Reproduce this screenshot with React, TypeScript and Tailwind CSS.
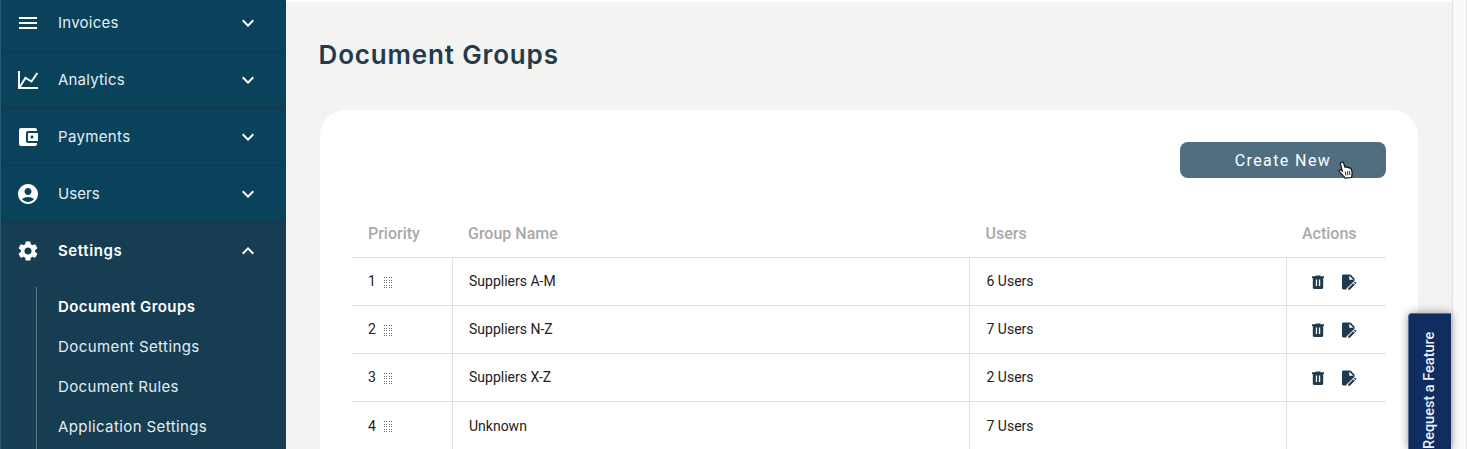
import { ReactNode } from "react"
import clsx from "clsx"
import {
  MdAccountBalanceWallet,
  MdAccountCircle,
  MdExpandLess,
  MdExpandMore,
  MdMenu,
  MdSettings,
} from "react-icons/md"

type NavItem = {
  label: string
  icon: ReactNode
  tracking: string
}

const navItems: NavItem[] = [
  { label: "Invoices", icon: <MdMenu size={24} />, tracking: "tracking-[0.25px]" },
  { label: "Analytics", icon: <ChartIcon />, tracking: "tracking-[0.2px]" },
  {
    label: "Payments",
    icon: <MdAccountBalanceWallet size={24} />,
    tracking: "tracking-[0.35px]",
  },
  {
    label: "Users",
    icon: <MdAccountCircle size={24} />,
    tracking: "tracking-[0.1px]",
  },
]

const settingsItems = [
  {
    label: "Document Groups",
    className: "font-semibold text-white tracking-[0.4px]",
  },
  { label: "Document Settings", className: "tracking-[0.42px]" },
  { label: "Document Rules", className: "tracking-[0.35px]" },
  { label: "Application Settings", className: "tracking-[0.4px]" },
]

const groups = [
  { priority: 1, name: "Suppliers A-M", users: "6 Users", editable: true },
  { priority: 2, name: "Suppliers N-Z", users: "7 Users", editable: true },
  { priority: 3, name: "Suppliers X-Z", users: "2 Users", editable: true },
  { priority: 4, name: "Unknown", users: "7 Users", editable: false },
]

export default function App() {
  return (
    <div className="flex h-[449px] overflow-hidden bg-[#fafafa] font-[Roboto,sans-serif]">
      <Sidebar />
      <main className="h-full flex-1 border-t-2 border-white bg-[#f3f3f1] pr-[34px] pl-[34px]">
        <h1 className="-ml-[1.5px] pt-[35px] font-[Inter,sans-serif] text-[26px] leading-9 font-semibold tracking-[0.85px] text-[#233b4b]">
          Document Groups
        </h1>
        <section className="mt-[37px] h-[400px] rounded-t-[26px] bg-white px-8 pt-8">
          <div className="flex justify-end">
            <button className="relative h-9 w-[206px] rounded-lg bg-[#506e80] pt-0.5 text-base tracking-[1.4px] text-white">
              Create New
              <HandCursor />
            </button>
          </div>
          <GroupTable />
        </section>
      </main>
      <div className="h-full w-[15px] border-x border-[#e4e4e4] bg-[#fafafa]" />
      <FeatureTab />
    </div>
  )
}

function Sidebar() {
  return (
    <nav className="h-full w-[286px] shrink-0 overflow-hidden border-l border-[#2a5a72] bg-[#0a425b] font-[Inter,sans-serif] text-[15px] text-[#e3eef3]">
      <div className="-mt-[5px]">
        {navItems.map((item) => (
          <div
            key={item.label}
            className="flex h-[57px] items-center border-b border-[#173548] pr-[26px] pl-[15px]"
          >
            <span className="text-white">{item.icon}</span>
            <span className={clsx("ml-[18px] pt-px", item.tracking)}>
              {item.label}
            </span>
            <MdExpandMore size={24} className="ml-auto text-white" />
          </div>
        ))}
      </div>
      <div className="h-[240px] bg-[#163d51]">
        <div className="flex h-14 items-center pr-[26px] pl-[15px] text-white">
          <MdSettings size={24} />
          <span className="ml-[18px] pt-px font-semibold tracking-[0.6px]">
            Settings
          </span>
          <MdExpandLess size={24} className="ml-auto" />
        </div>
        <ul className="mt-2 ml-[35px] h-[170px] border-l border-[#5b7b8b] pl-[21px]">
          {settingsItems.map((item) => (
            <li
              key={item.label}
              className={clsx("h-10 leading-10", item.className)}
            >
              {item.label}
            </li>
          ))}
        </ul>
      </div>
    </nav>
  )
}

function GroupTable() {
  return (
    <div className="mt-8 text-sm text-[#212121]">
      <div className="grid h-[47px] grid-cols-[100px_517px_317px_100px] items-center text-base font-medium text-[#a9a9a9]">
        <span className="pl-4">Priority</span>
        <span className="pl-4">Group Name</span>
        <span className="pl-[16.5px]">Users</span>
        <span className="pl-4">Actions</span>
      </div>
      {groups.map((group) => {
        const textClass = group.editable ? "pb-0.5" : ""
        return (
          <div
            key={group.priority}
            className="grid h-12 grid-cols-[100px_517px_317px_100px] border-t border-[#e0e0e0]"
          >
            <div className="flex items-center pl-4">
              <span className={clsx("w-4", textClass)}>{group.priority}</span>
              <DragHandle />
            </div>
            <div className="flex items-center border-l border-[#e0e0e0] pl-4">
              <span className={textClass}>{group.name}</span>
            </div>
            <div className="flex items-center border-l border-[#e0e0e0] pl-[16.5px]">
              <span className={textClass}>{group.users}</span>
            </div>
            <div className="flex items-center gap-[15px] border-l border-[#e0e0e0] pl-[23px] text-[#213b4c]">
              {group.editable && (
                <>
                  <TrashIcon />
                  <EditDocumentIcon />
                </>
              )}
            </div>
          </div>
        )
      })}
    </div>
  )
}

function FeatureTab() {
  return (
    <div className="absolute top-[313px] left-[1408px] flex h-[136px] w-[43px] justify-center overflow-hidden rounded-tl-[4px] border-t border-l border-[#5a6f96] bg-[#0f2d5f] pt-[17px] shadow-[0_0_10px_rgba(0,0,0,0.4)]">
      <span className="rotate-180 text-[14.5px] leading-5 font-medium whitespace-nowrap text-[#eaf0fa] [writing-mode:vertical-rl]">
        Request a Feature
      </span>
    </div>
  )
}

function ChartIcon() {
  return (
    <svg width="24" height="24" viewBox="0 0 24 24" fill="none">
      <path d="M3 3v17h19" stroke="currentColor" strokeWidth="2" />
      <path
        d="M3.5 19.5 9.5 9.8l6 3.7L21.3 5"
        stroke="currentColor"
        strokeWidth="2"
      />
    </svg>
  )
}

function DragHandle() {
  return (
    <svg
      width="9"
      height="12"
      viewBox="0 0 9 12"
      className="mt-[3px]"
      fill="#666"
    >
      {[0, 3, 5, 8, 10].map((y) =>
        [0, 2, 5, 7].map((x) => (
          <rect key={`${x}-${y}`} x={x} y={y} width="1" height="1" />
        )),
      )}
    </svg>
  )
}

function TrashIcon() {
  return (
    <svg width="16" height="16" viewBox="0 0 16 16">
      <path
        fill="currentColor"
        fillRule="evenodd"
        d="M5.5 1.5h5v.8H14V4h-.8v9.5c0 .8-.7 1.5-1.5 1.5H4.3c-.8 0-1.5-.7-1.5-1.5V4H2V2.3h3.5zM5.8 5.5V12h1.3V5.5zM8.9 5.5V12h1.3V5.5z"
      />
    </svg>
  )
}

function EditDocumentIcon() {
  return (
    <svg width="16" height="16" viewBox="0 0 16 16">
      <path
        fill="currentColor"
        fillRule="evenodd"
        d="M2.5.5h7l4 4v2.3L5.5 14.5v1h-3c-.8 0-1.5-.7-1.5-1.5V2C1 1.200 1.700.5 2.500.5zM8.300 1.700v4h4z"
      />
      <path
        fill="currentColor"
        d="M7.200 15.700v-1.500l5-5 1.600 1.600-4.900 4.900zM12.900 8.500l.7-.7c.2-.2.5-.2.7 0l.9.9c.2.2.2.5 0 .7l-.7.7z"
      />
    </svg>
  )
}

function HandCursor() {
  return (
    <svg
      width="18"
      height="20"
      viewBox="0 0 18 20"
      className="absolute top-[18px] left-[157px]"
    >
      <path
        d="M4.500 2.200c.9-.4 1.800 0 2.100.9L8 7.200c.7-.6 1.700-.4 2.100.3.800-.5 1.700-.2 2.100.6.900-.4 1.700 0 2 .9l.9 3.300c.2 1 .1 1.700-.2 2.600l-.3 2.600-6.600.5c-.8-1.700-2.200-2.500-3.800-4.300L2.100 11.300c-.4-1.200.9-1.900 1.800-1.200l1.400 1L3.500 4.200c-.3-.9.200-1.700 1-2z"
        fill="#fff"
        stroke="#111"
        strokeWidth="1.2"
      />
      <path
        d="M8.300 11.500l.6 4M10.400 11.300l.5 4M12.400 11l.5 4"
        stroke="#111"
        strokeWidth="0.9"
      />
    </svg>
  )
}
